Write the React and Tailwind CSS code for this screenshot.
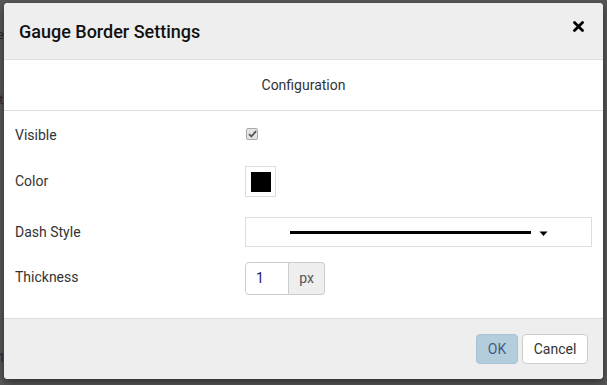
import React from 'react';

const Row = ({ label, labelClass = 'self-center', className = '', children }) => (
  <div className={`flex ${className}`}>
    <div className={`w-[230px] shrink-0 text-[14px] text-[#333] ${labelClass}`}>{label}</div>
    <div className="flex items-center">{children}</div>
  </div>
);

export default function App() {
  return (
    <div
      className="relative h-[385px] w-[607px] overflow-hidden bg-[#585858] pl-[4px] pt-[3px]"
      style={{ fontFamily: 'Roboto, "Liberation Sans", sans-serif' }}
    >
      {/* faint page content behind the overlay */}
      <span className="absolute left-[-3px] top-[28px] text-[13px] leading-none text-[#2a2a2a]">e</span>
      <span className="absolute left-[-1px] top-[93px] text-[13px] leading-none text-[#2a2a2a]">t</span>
      <span className="absolute left-[-2px] top-[351px] text-[13px] leading-none text-[#2a2a2a]">1</span>

      <div className="relative flex h-[376px] w-[599px] flex-col overflow-hidden rounded-[4px] bg-white shadow-[0_3px_9px_rgba(0,0,0,0.5)]">
        <div className="flex h-[57px] shrink-0 items-center justify-between border-b border-[#dddddd] bg-[#eeeeee] pl-[15px] pr-[19px]">
          <h4 className="mt-[2px] text-[18px] font-medium leading-none text-[#111]">Gauge Border Settings</h4>
          <svg width="11" height="11" viewBox="0 0 11 11" className="-mt-[9px]">
            <path d="M1.5 1.5 L9.5 9.5 M9.5 1.5 L1.5 9.5" stroke="#000" strokeWidth="2.8" strokeLinecap="round" />
          </svg>
        </div>

        <div className="flex h-[51px] shrink-0 items-center justify-center border-b border-[#dddddd] text-[14px] text-[#333]">
          Configuration
        </div>

        <div className="flex flex-1 flex-col px-[11px] pt-[11px]">
          <Row label="Visible" className="h-[26px]">
            <span className="ml-[1px] mt-[-3px] flex h-[12px] w-[12px] items-center justify-center rounded-[2px] border border-[#a9a9a9] bg-[#e4e4e4]">
              <svg width="9" height="8" viewBox="0 0 9 8">
                <path d="M1 4.2 L3.4 6.5 L8 1.2" fill="none" stroke="#555" strokeWidth="1.8" />
              </svg>
            </span>
          </Row>

          <Row label="Color" className="mt-[18px] h-[31px]">
            <span className="flex h-[31px] w-[31px] items-center justify-center border border-[#dddddd] bg-white">
              <span className="h-[20px] w-[20px] bg-black" />
            </span>
          </Row>

          <Row label="Dash Style" className="mt-[20px] h-[30px]">
            <div className="flex h-[30px] w-[347px] items-center border border-[#dddddd] bg-white">
              <span className="ml-[44px] h-[3px] w-[241px] bg-black" />
              <svg width="9" height="6" viewBox="0 0 9 6" className="ml-[8px] mt-[4px]">
                <path d="M0.5 0.5 H8.5 L4.5 5 Z" fill="#000" />
              </svg>
            </div>
          </Row>

          <Row label="Thickness" labelClass="self-start mt-[5px]" className="mt-[15px] h-[33px]">
            <div className="flex h-[33px]">
              <div className="flex w-[44px] items-center rounded-l-[4px] border border-[#cccccc] bg-white pl-[10px] text-[14px] text-[#1a1a6e]">
                1
              </div>
              <div className="flex w-[36px] items-center justify-center rounded-r-[4px] border border-l-0 border-[#cccccc] bg-[#eeeeee] text-[14px] text-[#555]">
                px
              </div>
            </div>
          </Row>
        </div>

        <div className="flex h-[61px] shrink-0 items-center justify-end gap-[4px] border-t border-[#dddddd] bg-[#eeeeee] pr-[15px]">
          <button className="h-[30px] w-[42px] rounded-[4px] border border-[#a9c3d6] bg-[#b3cddd] text-[14px] text-[#3f5f80]">
            OK
          </button>
          <button className="h-[30px] w-[66px] rounded-[4px] border border-[#cccccc] bg-white text-[14px] text-[#333]">
            Cancel
          </button>
        </div>
      </div>
    </div>
  );
}
